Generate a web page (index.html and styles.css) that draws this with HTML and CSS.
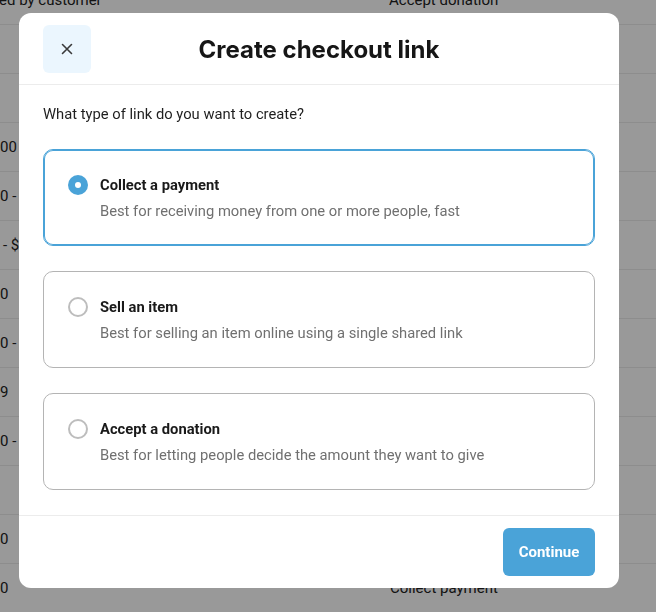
FILE: index.html
```html
<!DOCTYPE html>
<html lang="en">
<head>
<meta charset="utf-8">
<title>Create checkout link</title>
<link rel="stylesheet" href="styles.css">
</head>
<body>
<div class="page">
  <div class="row"><span class="c1 i-1">ed by customer</span><span class="c2">Accept donation</span></div>
  <div class="row"></div>
  <div class="row"></div>
  <div class="row"><span class="c1">00</span></div>
  <div class="row"><span class="c1">0 -</span></div>
  <div class="row"><span class="c1 i3">- $</span></div>
  <div class="row"><span class="c1">0</span></div>
  <div class="row"><span class="c1">0 -</span></div>
  <div class="row"><span class="c1">9</span></div>
  <div class="row"><span class="c1">0 -</span></div>
  <div class="row"></div>
  <div class="row"><span class="c1">0</span></div>
  <div class="row"><span class="c1">0</span><span class="c2">Collect payment</span></div>
</div>
<div class="overlay"></div>
<div class="modal" role="dialog">
  <header class="modal-head">
    <button class="close" aria-label="Close">
      <svg width="14" height="14" viewBox="0 0 14 14"><path d="M2.5 2.5 L11.5 11.5 M11.5 2.5 L2.5 11.5" stroke="#3a3a3a" stroke-width="1.6" stroke-linecap="round" fill="none"/></svg>
    </button>
    <h1 class="title">Create checkout link</h1>
    <span></span>
  </header>
  <section class="modal-body">
    <p class="question">What type of link do you want to create?</p>
    <div class="options">
      <label class="option selected">
        <span class="radio on"></span>
        <span class="texts">
          <span class="opt-title">Collect a payment</span>
          <span class="opt-desc">Best for receiving money from one or more people, fast</span>
        </span>
      </label>
      <label class="option">
        <span class="radio"></span>
        <span class="texts">
          <span class="opt-title">Sell an item</span>
          <span class="opt-desc">Best for selling an item online using a single shared link</span>
        </span>
      </label>
      <label class="option">
        <span class="radio"></span>
        <span class="texts">
          <span class="opt-title">Accept a donation</span>
          <span class="opt-desc">Best for letting people decide the amount they want to give</span>
        </span>
      </label>
    </div>
  </section>
  <footer class="modal-foot">
    <button class="continue">Continue</button>
  </footer>
</div>
</body>
</html>
```
FILE: styles.css
```css
* { box-sizing: border-box; }
html, body { margin: 0; padding: 0; }
body {
  width: 656px;
  height: 612px;
  overflow: hidden;
  background: #ffffff;
  font-family: Roboto, "Liberation Sans", sans-serif;
  color: #1a1a1a;
}
.page {
  margin-top: -24px;
}
.row {
  height: 49px;
  border-bottom: 1px solid #ececec;
  display: flex;
  align-items: center;
  font-size: 15px;
  color: #222;
}
.c1 { width: 390px; white-space: nowrap; }
.i-1 { margin-left: -1px; }
.i3 { padding-left: 3px; }
.c2 { white-space: nowrap; }
.overlay {
  position: fixed;
  inset: 0;
  background: rgba(0, 0, 0, 0.4);
}
.modal {
  position: fixed;
  left: 19px;
  top: 13px;
  width: 600px;
  height: 575px;
  background: #fff;
  border-radius: 12px;
  display: flex;
  flex-direction: column;
}
.modal-head {
  display: grid;
  grid-template-columns: 48px 1fr 48px;
  align-items: center;
  padding: 12px 24px 11px;
  border-bottom: 1px solid #ececec;
}
.close {
  width: 48px;
  height: 48px;
  border: 0;
  border-radius: 6px;
  background: #ebf6fe;
  display: flex;
  align-items: center;
  justify-content: center;
  padding: 0;
}
.title {
  margin: 0;
  text-align: center;
  font-family: Inter, "Liberation Sans", sans-serif;
  font-weight: 700;
  font-size: 24px;
  color: #161616;
}
.modal-body {
  padding: 19px 24px 25px;
}
.question {
  margin: 0 0 25px;
  font-size: 14.75px;
  line-height: 20px;
  color: #1f1f1f;
}
.options {
  display: flex;
  flex-direction: column;
  gap: 25px;
}
.option {
  height: 97px;
  border: 1px solid #b4b4b4;
  border-radius: 10px;
  padding: 25px 24px 24px;
  display: flex;
  align-items: flex-start;
  gap: 12px;
}
.option.selected {
  border-color: #4aa3d8;
  box-shadow: inset 0 0 0 1px #4aa3d8;
}
.radio {
  flex: none;
  width: 20px;
  height: 20px;
  border-radius: 50%;
  border: 2px solid #bdbdbd;
  display: flex;
  align-items: center;
  justify-content: center;
}
.radio.on {
  border: 0;
  background: #4aa3d8;
}
.radio.on::after {
  content: "";
  width: 6px;
  height: 6px;
  border-radius: 50%;
  background: #fff;
}
.texts {
  display: flex;
  flex-direction: column;
  gap: 6px;
}
.opt-title {
  font-size: 14.75px;
  line-height: 20px;
  font-weight: 700;
  color: #1a1a1a;
}
.opt-desc {
  font-size: 14.75px;
  line-height: 20px;
  color: #707070;
}
.modal-foot {
  border-top: 1px solid #ececec;
  padding: 12px 24px;
  display: flex;
  justify-content: flex-end;
}
.continue {
  height: 48px;
  width: 92px;
  border: 0;
  border-radius: 6px;
  background: #4aa3d8;
  color: #fff;
  font-family: Roboto, "Liberation Sans", sans-serif;
  font-weight: 700;
  font-size: 15px;
}
```
